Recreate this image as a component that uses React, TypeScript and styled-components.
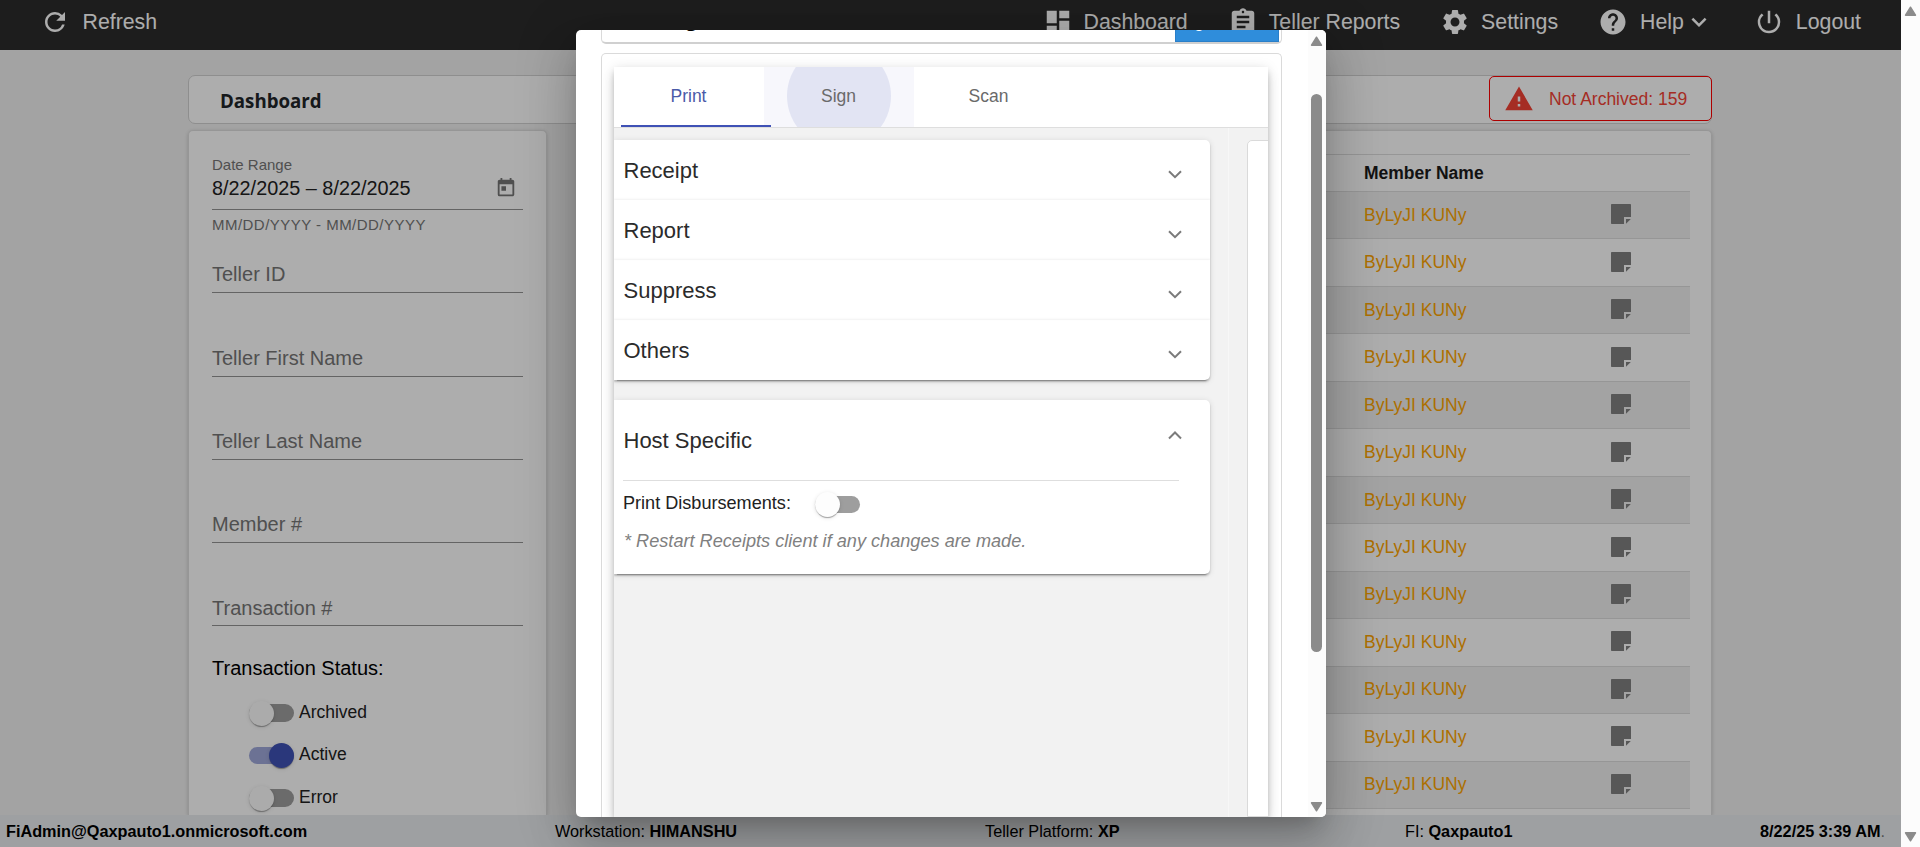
import React from "react";
import styled, { createGlobalStyle } from "styled-components";
import {
  MdRefresh,
  MdDashboard,
  MdAssignment,
  MdSettings,
  MdHelp,
  MdExpandMore,
  MdPowerSettingsNew,
  MdWarning,
  MdToday,
} from "react-icons/md";

const GlobalStyle = createGlobalStyle`
  * { box-sizing: border-box; }
  body {
    margin: 0;
    overflow: hidden;
    font-family: "Liberation Sans", Arial, sans-serif;
  }
`;

const Screen = styled.div`
  display: flex;
  width: 1920px;
  height: 847px;
  overflow: hidden;
`;

const Page = styled.div`
  position: relative;
  display: flex;
  flex-direction: column;
  width: 1901px;
  height: 847px;
  background: #f1f1f1;
  overflow: hidden;
`;

const TopBar = styled.header`
  display: flex;
  align-items: flex-start;
  justify-content: space-between;
  flex: none;
  height: 50px;
  padding: 7px 40px 0 40px;
  background: #2c2c2c;
  color: #fff;
`;

const Nav = styled.nav`
  display: flex;
  gap: 40px;
`;

const NavItem = styled.a<{ $gap?: number }>`
  display: flex;
  align-items: center;
  gap: ${(p) => p.$gap ?? 11}px;
  height: 30px;
  font-size: 21.3px;
  line-height: 30px;
  white-space: nowrap;
`;

const HelpLabel = styled.span`
  display: flex;
  align-items: center;
`;

const Content = styled.main`
  display: flex;
  flex-direction: column;
  flex: 1;
  min-height: 0;
  width: 1524px;
  margin: 25px 0 0 188px;
  gap: 6px;
`;

const TitleBar = styled.div`
  display: flex;
  align-items: flex-start;
  justify-content: space-between;
  flex: none;
  height: 49px;
  padding-left: 31px;
  border: 1px solid #d2d2d2;
  border-radius: 7px;
  background: #fff;
`;

const Title = styled.h1`
  margin: 0;
  font: 700 18.7px/50px "Open Sans", "Noto Sans", sans-serif;
  color: #212529;
`;

const Alert = styled.div`
  display: flex;
  align-items: center;
  gap: 15px;
  width: 223px;
  height: 45px;
  margin-right: -1px;
  padding-left: 14px;
  border: 1px solid #f00;
  border-radius: 5px;
  color: #f44336;
  font-size: 17.5px;
  white-space: nowrap;
`;

const AlertText = styled.span`
  padding-top: 2px;
`;

const Columns = styled.div`
  display: flex;
  justify-content: space-between;
  flex: 1;
  min-height: 0;
`;

const Card = styled.section<{ $width: number }>`
  width: ${(p) => p.$width}px;
  border: 1px solid #dedede;
  border-bottom: 0;
  border-radius: 5px 5px 0 0;
  background: #fff;
  box-shadow: 0 1px 4px rgba(0, 0, 0, 0.18);
  overflow: hidden;
`;

const Filters = styled.form`
  padding: 24px 23px 0 23px;
`;

const DateLabel = styled.div`
  font-size: 15px;
  line-height: 20px;
  color: #767676;
`;

const DateValue = styled.div`
  display: flex;
  justify-content: space-between;
  align-items: center;
  height: 26px;
  padding-right: 6px;
  font-size: 19.85px;
  color: #212121;
  & svg { color: #757575; }
`;

const DateField = styled.div`
  height: 55px;
  border-bottom: 1px solid #949494;
`;

const Hint = styled.div`
  padding-top: 5px;
  height: 27px;
  font-size: 15px;
  line-height: 20px;
  letter-spacing: 0.47px;
  color: #767676;
`;

const Field = styled.div`
  height: 83.3px;
  padding-top: 51.6px;
  border-bottom: 1px solid #949494;
  font-size: 20px;
  line-height: 26px;
  color: #767676;
`;

const FieldList = styled.div`
  & > div:first-child { height: 56.3px; padding-top: 24.3px; }
`;

const StatusTitle = styled.div`
  margin-top: 28.5px;
  height: 36px;
  font-size: 20px;
  line-height: 26px;
  color: #000;
`;

const ToggleRow = styled.label`
  display: flex;
  align-items: center;
  gap: 5px;
  height: 42.5px;
  margin-left: 37px;
  font-size: 17.5px;
  color: #212121;
`;

const Track = styled.span<{ $on?: boolean }>`
  display: flex;
  align-items: center;
  justify-content: ${(p) => (p.$on ? "flex-end" : "flex-start")};
  width: 45px;
  height: 17.5px;
  border-radius: 9px;
  margin-top: 2px;
  background: ${(p) => (p.$on ? "#9fa8da" : "#9e9e9e")};
`;

const Thumb = styled.span<{ $on?: boolean }>`
  width: 25px;
  height: 25px;
  border-radius: 50%;
  background: ${(p) => (p.$on ? "#3f51b5" : "#fdfdfd")};
  box-shadow: 0 2px 1px -1px rgba(0, 0, 0, 0.2), 0 1px 1px rgba(0, 0, 0, 0.14),
    0 1px 4px rgba(0, 0, 0, 0.12);
`;

const TableArea = styled.div`
  padding: 23px 21px 0 300px;
`;

const HeadRow = styled.div`
  height: 37px;
  padding-left: 435px;
  border-top: 1px solid #dedede;
  font-size: 17.5px;
  font-weight: 700;
  line-height: 36px;
  color: #1b1b1b;
`;

const Row = styled.div<{ $shaded: boolean }>`
  display: flex;
  align-items: center;
  justify-content: space-between;
  height: 47.48px;
  padding: 0 59px 0 435px;
  border-top: 1px solid #dedede;
  background: ${(p) => (p.$shaded ? "#f0f0f0" : "#fff")};
  font-size: 17.5px;
  color: #ffa500;
  & svg { margin-top: -2px; }
`;

const Footer = styled.footer`
  display: flex;
  align-items: center;
  flex: none;
  height: 32px;
  padding-left: 6px;
  background: #e9ecef;
  font-size: 16.25px;
  color: #000;
  white-space: nowrap;
`;

const FooterItem = styled.div<{ $width: number }>`
  flex: none;
  width: ${(p) => p.$width}px;
`;

const Faint = styled.span`
  color: #777;
`;

const Backdrop = styled.div`
  position: absolute;
  inset: 0;
  background: rgba(0, 0, 0, 0.32);
  display: flex;
  justify-content: center;
  align-items: flex-start;
  padding-top: 30px;
`;

const Dialog = styled.div`
  display: flex;
  width: 750px;
  height: 787px;
  border-radius: 5px;
  background: #fff;
  overflow: hidden;
  box-shadow: 0 14px 19px -9px rgba(0, 0, 0, 0.2), 0 30px 48px 4px rgba(0, 0, 0, 0.14),
    0 11px 58px 10px rgba(0, 0, 0, 0.12);
`;

const DialogBody = styled.div`
  display: flex;
  flex-direction: column;
  gap: 9px;
  width: 732px;
  padding-left: 25px;
  overflow: hidden;
`;

const DialogHeader = styled.div`
  display: flex;
  justify-content: space-between;
  align-items: flex-end;
  flex: none;
  width: 681px;
  height: 54px;
  margin-top: -40px;
  padding: 0 2px 0 28px;
  border: 1px solid #dadada;
  border-bottom: 2px solid #d0d0d0;
  border-radius: 5px;
`;

const DialogTitle = styled.div`
  height: 36px;
  font: 700 19px/26px "Open Sans", sans-serif;
  color: #000;
`;

const DialogButton = styled.div`
  width: 104px;
  height: 44px;
  padding-left: 3px;
  border: 1px solid #2a7fc9;
  background: #2f8ddb;
  color: #fff;
  font-size: 17.5px;
  line-height: 44px;
`;

const DialogSection = styled.div`
  flex: 1;
  width: 681px;
  min-height: 0;
  padding: 13px 13px 0 12px;
  border: 1px solid #dadada;
  border-bottom: 0;
  border-radius: 5px 5px 0 0;
`;

const TabPanel = styled.div`
  display: flex;
  flex-direction: column;
  width: 654px;
  height: 100%;
  background: #f2f2f2;
  box-shadow: 0 4px 6px -1px rgba(0, 0, 0, 0.2), 0 8px 12px rgba(0, 0, 0, 0.12),
    0 1px 12px rgba(0, 0, 0, 0.1);
`;

const Tabs = styled.div`
  display: flex;
  flex: none;
  height: 61px;
  border-bottom: 1px solid #dedede;
  background: #fff;
`;

const Tab = styled.div<{ $active?: boolean; $hover?: boolean }>`
  position: relative;
  display: flex;
  align-items: center;
  justify-content: center;
  width: 150px;
  height: 60px;
  padding-bottom: 1px;
  overflow: ${(p) => (p.$active ? "visible" : "hidden")};
  background: ${(p) => (p.$hover ? "#f7f7fc" : "transparent")};
  font-size: 17.5px;
  color: ${(p) => (p.$active ? "#4a5aa8" : "#6a6a6a")};
`;

const InkBar = styled.span`
  position: absolute;
  left: 7.5px;
  bottom: 0;
  width: 150px;
  height: 2px;
  background: #3f51b5;
  z-index: 1;
`;

const Ripple = styled.span`
  position: absolute;
  left: 23px;
  top: -23px;
  width: 104px;
  height: 104px;
  border-radius: 50%;
  background: #e2e4f3;
`;

const TabText = styled.span`
  position: relative;
`;

const TabBody = styled.div`
  display: flex;
  flex: 1;
  min-height: 0;
  padding-top: 12px;
  overflow: hidden;
`;

const Options = styled.div`
  display: flex;
  flex-direction: column;
  flex: none;
  gap: 20px;
  width: 615px;
  margin-top: -12px;
  padding: 12px 18px 0 0;
  border-right: 1px solid #f7f7f7;
`;

const SideBox = styled.div`
  flex: none;
  width: 60px;
  margin-left: 18px;
  border: 1px solid #dadada;
  border-radius: 5px 0 0 0;
  background: #fff;
`;

const Panel = styled.div`
  border-radius: 0 5px 5px 0;
  background: #fff;
  box-shadow: 0 4px 1px -3px rgba(0, 0, 0, 0.25), 0 2px 2px rgba(0, 0, 0, 0.2),
    0 1px 6px rgba(0, 0, 0, 0.12);
`;

const Accordion = styled.div`
  display: flex;
  justify-content: space-between;
  height: 60px;
  padding: 0 28px 0 10px;
  font-size: 22px;
  line-height: 62px;
  color: #2b2b2b;
  & + & { box-shadow: 0 -1px 2px rgba(0, 0, 0, 0.06); }
  & svg { margin-top: 30px; }
`;

const HostHeader = styled.div`
  display: flex;
  justify-content: space-between;
  height: 81px;
  margin: 0 31px 0 9px;
  padding-left: 1px;
  border-bottom: 1px solid #dedede;
  font-size: 22px;
  line-height: 82px;
  color: #2b2b2b;
  & svg { margin: 31px -3px 0 0; }
`;

const HostPanel = styled(Panel)`
  height: 174px;
`;

const SettingRow = styled.div`
  display: flex;
  align-items: center;
  gap: 24px;
  height: 45px;
  padding-left: 9.5px;
  font-size: 18.1px;
  color: #212121;
`;

const Note = styled.div`
  padding-left: 10.5px;
  font-size: 18.15px;
  font-style: italic;
  line-height: 30px;
  color: #808080;
`;

const ScrollRail = styled.div<{ $width: number }>`
  display: flex;
  flex-direction: column;
  align-items: center;
  justify-content: space-between;
  flex: none;
  width: ${(p) => p.$width}px;
  height: 100%;
  padding: 6px 0 5px;
  background: #fcfcfc;
`;

const DialogThumb = styled.div`
  width: 11px;
  height: 558px;
  margin-bottom: 102px;
  border-radius: 6px;
  background: #8b8b8b;
`;

const Arrow = ({ down }: { down?: boolean }) => (
  <svg width="13" height="10" viewBox="0 0 13 10">
    <path
      d={down ? "M1.5 .8h10l-5 8z" : "M1.5 9.2h10l-5-8z"}
      fill="#8b8b8b"
      stroke="#8b8b8b"
      strokeWidth="1.4"
      strokeLinejoin="round"
    />
  </svg>
);

const Chevron = ({ up }: { up?: boolean }) => (
  <svg width="14" height="9" viewBox="0 0 14 9">
    <path d={up ? "M1 7.500L7 1.500L13 7.500" : "M1 1.200L7 7.200L13 1.200"} fill="none" stroke="#7b7b7b" strokeWidth="2" />
  </svg>
);

const NoteIcon = () => (
  <svg width="20" height="20" viewBox="0 0 20 20" fill="#808080">
    <path d="M.8 0h18.400q.8 0 .8.8V13h-7v7H.8Q0 20 0 19.200V.8Q0 0 .8 0z" />
    <path d="M15 15h4.800L15 19.800z" />
  </svg>
);

const Toggle = ({ on }: { on?: boolean }) => (
  <Track $on={on}>
    <Thumb $on={on} />
  </Track>
);

const fields = ["Teller ID", "Teller First Name", "Teller Last Name", "Member #", "Transaction #"];
const members = Array.from({ length: 14 }, () => "ByLyJI KUNy");
const sections = ["Receipt", "Report", "Suppress", "Others"];

export default function App() {
  return (
    <Screen>
      <GlobalStyle />
      <Page>
        <TopBar>
          <NavItem $gap={12.5}>
            <MdRefresh size={30} />
            Refresh
          </NavItem>
          <Nav>
            <NavItem><MdDashboard size={30} />Dashboard</NavItem>
            <NavItem><MdAssignment size={30} />Teller Reports</NavItem>
            <NavItem><MdSettings size={30} />Settings</NavItem>
            <NavItem $gap={12}>
              <MdHelp size={30} />
              <HelpLabel>Help<MdExpandMore size={30} /></HelpLabel>
            </NavItem>
            <NavItem $gap={12}><MdPowerSettingsNew size={30} />Logout</NavItem>
          </Nav>
        </TopBar>

        <Content>
          <TitleBar>
            <Title>Dashboard</Title>
            <Alert><MdWarning size={30} /><AlertText>Not Archived: 159</AlertText></Alert>
          </TitleBar>
          <Columns>
            <Card $width={359}>
              <Filters>
                <DateField>
                  <DateLabel>Date Range</DateLabel>
                  <DateValue>
                    8/22/2025 – 8/22/2025
                    <MdToday size={22} />
                  </DateValue>
                </DateField>
                <Hint>MM/DD/YYYY - MM/DD/YYYY</Hint>
                <FieldList>
                  {fields.map((f) => <Field key={f}>{f}</Field>)}
                </FieldList>
                <StatusTitle>Transaction Status:</StatusTitle>
                <ToggleRow><Toggle />Archived</ToggleRow>
                <ToggleRow><Toggle on />Active</ToggleRow>
                <ToggleRow><Toggle />Error</ToggleRow>
              </Filters>
            </Card>
            <Card $width={1084}>
              <TableArea>
                <HeadRow>Member Name</HeadRow>
                {members.map((m, i) => (
                  <Row key={i} $shaded={i % 2 === 0}>
                    {m}
                    <NoteIcon />
                  </Row>
                ))}
              </TableArea>
            </Card>
          </Columns>
        </Content>

        <Footer>
          <FooterItem $width={549}><b>FiAdmin@Qaxpauto1.onmicrosoft.com</b></FooterItem>
          <FooterItem $width={430}>Workstation: <b>HIMANSHU</b></FooterItem>
          <FooterItem $width={420}>Teller Platform: <b>XP</b></FooterItem>
          <FooterItem $width={355}>FI: <b>Qaxpauto1</b></FooterItem>
          <FooterItem $width={130}><b>8/22/25 3:39 AM</b><Faint>.</Faint></FooterItem>
        </Footer>

        <Backdrop>
          <Dialog>
            <DialogBody>
              <DialogHeader>
                <DialogTitle>Settings</DialogTitle>
                <DialogButton>Sign</DialogButton>
              </DialogHeader>
              <DialogSection>
                <TabPanel>
                  <Tabs>
                    <Tab $active>Print<InkBar /></Tab>
                    <Tab $hover><Ripple /><TabText>Sign</TabText></Tab>
                    <Tab>Scan</Tab>
                  </Tabs>
                  <TabBody>
                    <Options>
                      <Panel>
                        {sections.map((s) => (
                          <Accordion key={s}>{s}<Chevron /></Accordion>
                        ))}
                      </Panel>
                      <HostPanel>
                        <HostHeader>Host Specific<Chevron up /></HostHeader>
                        <SettingRow>Print Disbursements:<Toggle /></SettingRow>
                        <Note>* Restart Receipts client if any changes are made.</Note>
                      </HostPanel>
                    </Options>
                    <SideBox />
                  </TabBody>
                </TabPanel>
              </DialogSection>
            </DialogBody>
            <ScrollRail $width={18}>
              <Arrow />
              <DialogThumb />
              <Arrow down />
            </ScrollRail>
          </Dialog>
        </Backdrop>
      </Page>
      <ScrollRail $width={19}>
        <Arrow />
        <Arrow down />
      </ScrollRail>
    </Screen>
  );
}
